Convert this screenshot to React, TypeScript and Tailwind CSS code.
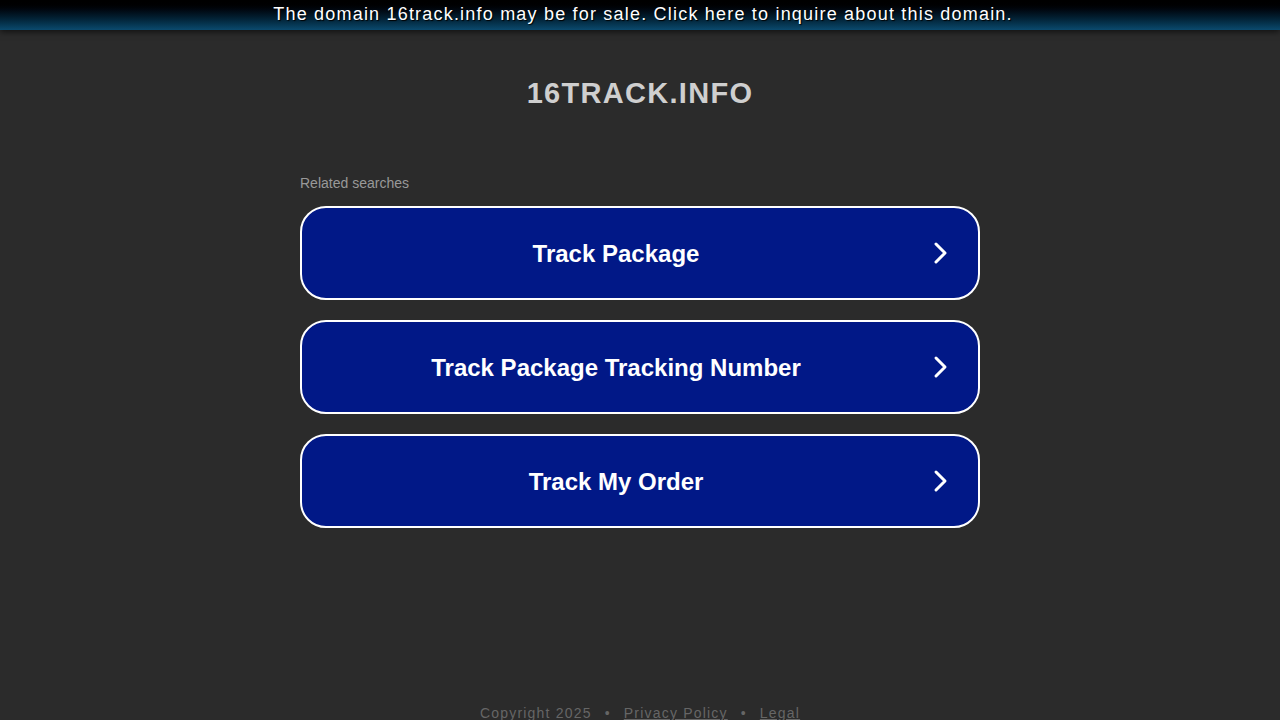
import React from "react";

const items = ["Track Package", "Track Package Tracking Number", "Track My Order"];

function Chevron() {
  return (
    <svg width="18" height="24" viewBox="0 0 18 24" fill="none" className="absolute right-[28px] top-1/2 -translate-y-1/2">
      <path d="M4 3 L13 12 L4 21" stroke="white" strokeWidth="3" strokeLinecap="round" strokeLinejoin="round" />
    </svg>
  );
}

export default function App() {
  return (
    <div className="min-h-[720px] h-[720px] bg-[#2b2b2b] flex flex-col overflow-hidden" style={{ fontFamily: '"Liberation Sans", Arial, sans-serif' }}>
      <div className="h-[30px] shrink-0 bg-gradient-to-b from-[#000000] to-[#0b4a6e] shadow-[0_2px_6px_rgba(0,0,0,0.6)] flex items-center justify-center text-white text-[18px] tracking-[1.2px] leading-[28px] pb-[2px] pl-[6px] [text-shadow:1px_1px_1px_#000]">
        The domain 16track.info may be for sale. Click here to inquire about this domain.
      </div>
      <div className="flex flex-col items-center">
        <h1 className="mt-[45px] text-[29px] font-bold text-[#cfcfcf] tracking-[1.3px] leading-[36px]">16TRACK.INFO</h1>
        <div className="w-[680px] mt-[64px]">
          <div className="text-[14px] text-[#999999] leading-[16px] mb-[15px]">Related searches</div>
          <div className="flex flex-col gap-[20px]">
            {items.map((t) => (
              <div key={t} className="relative h-[94px] rounded-[26px] border-2 border-white bg-[#011887] flex items-center justify-center">
                <span className="text-white font-bold text-[24px] pr-[48px] pt-[2px]">{t}</span>
                <Chevron />
              </div>
            ))}
          </div>
        </div>
      </div>
      <div className="mt-auto flex justify-center items-center gap-[13px] text-[14px] text-[#666666] tracking-[1.2px] leading-[14px] h-[14px] mb-[0px]">
        <span>Copyright 2025</span>
        <span>•</span>
        <span className="underline">Privacy Policy</span>
        <span>•</span>
        <span className="underline">Legal</span>
      </div>
    </div>
  );
}
